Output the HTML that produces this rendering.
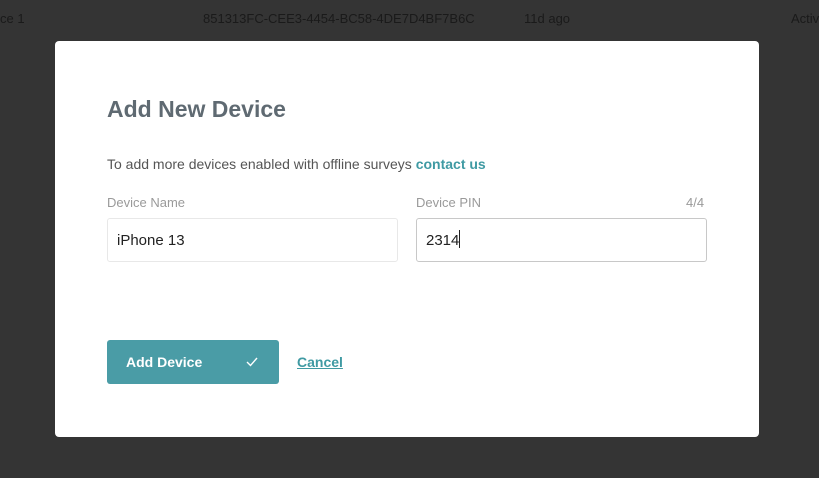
<!DOCTYPE html>
<html><head><style>
body{margin:0;width:819px;height:478px;background:#343434;font-family:"Liberation Sans",sans-serif;position:relative;overflow:hidden}
.t{position:absolute;top:11px;color:#1a1a1a;font-size:13px}
.m{position:absolute;left:55px;top:41px;width:704px;height:396px;background:#fff;border-radius:4px}
.a{position:absolute}
h1{position:absolute;left:52px;top:55px;margin:0;font-size:23px;font-weight:bold;color:#5f6a72}
.l{color:#9a9a9a;font-size:13px}
.in{position:absolute;top:177px;width:291px;height:44px;border:1px solid #e8e8e8;border-radius:3px;font-size:15px;color:#222;line-height:44px;padding-left:9px;box-sizing:border-box}
</style></head><body>
<div class="t" style="left:0">ce 1</div>
<div class="t" style="left:203px">851313FC-CEE3-4454-BC58-4DE7D4BF7B6C</div>
<div class="t" style="left:524px">11d ago</div>
<div class="t" style="left:791px">Activ</div>
<div class="m">
<h1>Add New Device</h1>
<div class="a" style="left:52px;top:115px;font-size:14px;color:#555">To add more devices enabled with offline surveys <b style="color:#3f9aa3">contact us</b></div>
<div class="a l" style="left:52px;top:154px">Device Name</div>
<div class="a l" style="left:361px;top:154px">Device PIN</div>
<div class="a l" style="left:631px;top:154px">4/4</div>
<div class="in" style="left:52px">iPhone 13</div>
<div class="in" style="left:361px;border-color:#c8c8c8">2314<span style="display:inline-block;width:1px;height:18px;background:#222;vertical-align:-3px"></span></div>
<div class="a" style="left:52px;top:299px;width:172px;height:44px;background:#4a9ca6;border-radius:3px;color:#fff;font-size:14px;font-weight:bold;line-height:44px">
<span style="position:absolute;left:19px">Add Device</span>
<svg style="position:absolute;left:139px;top:17px" width="12" height="10" viewBox="0 0 12 10"><path d="M1 5l3.5 3.5L11 1" stroke="#fff" stroke-width="1.4" fill="none"/></svg></div>
<div class="a" style="left:242px;top:313px;font-size:14px;font-weight:bold;color:#3f9aa3;text-decoration:underline">Cancel</div>
</div>
</body></html>
